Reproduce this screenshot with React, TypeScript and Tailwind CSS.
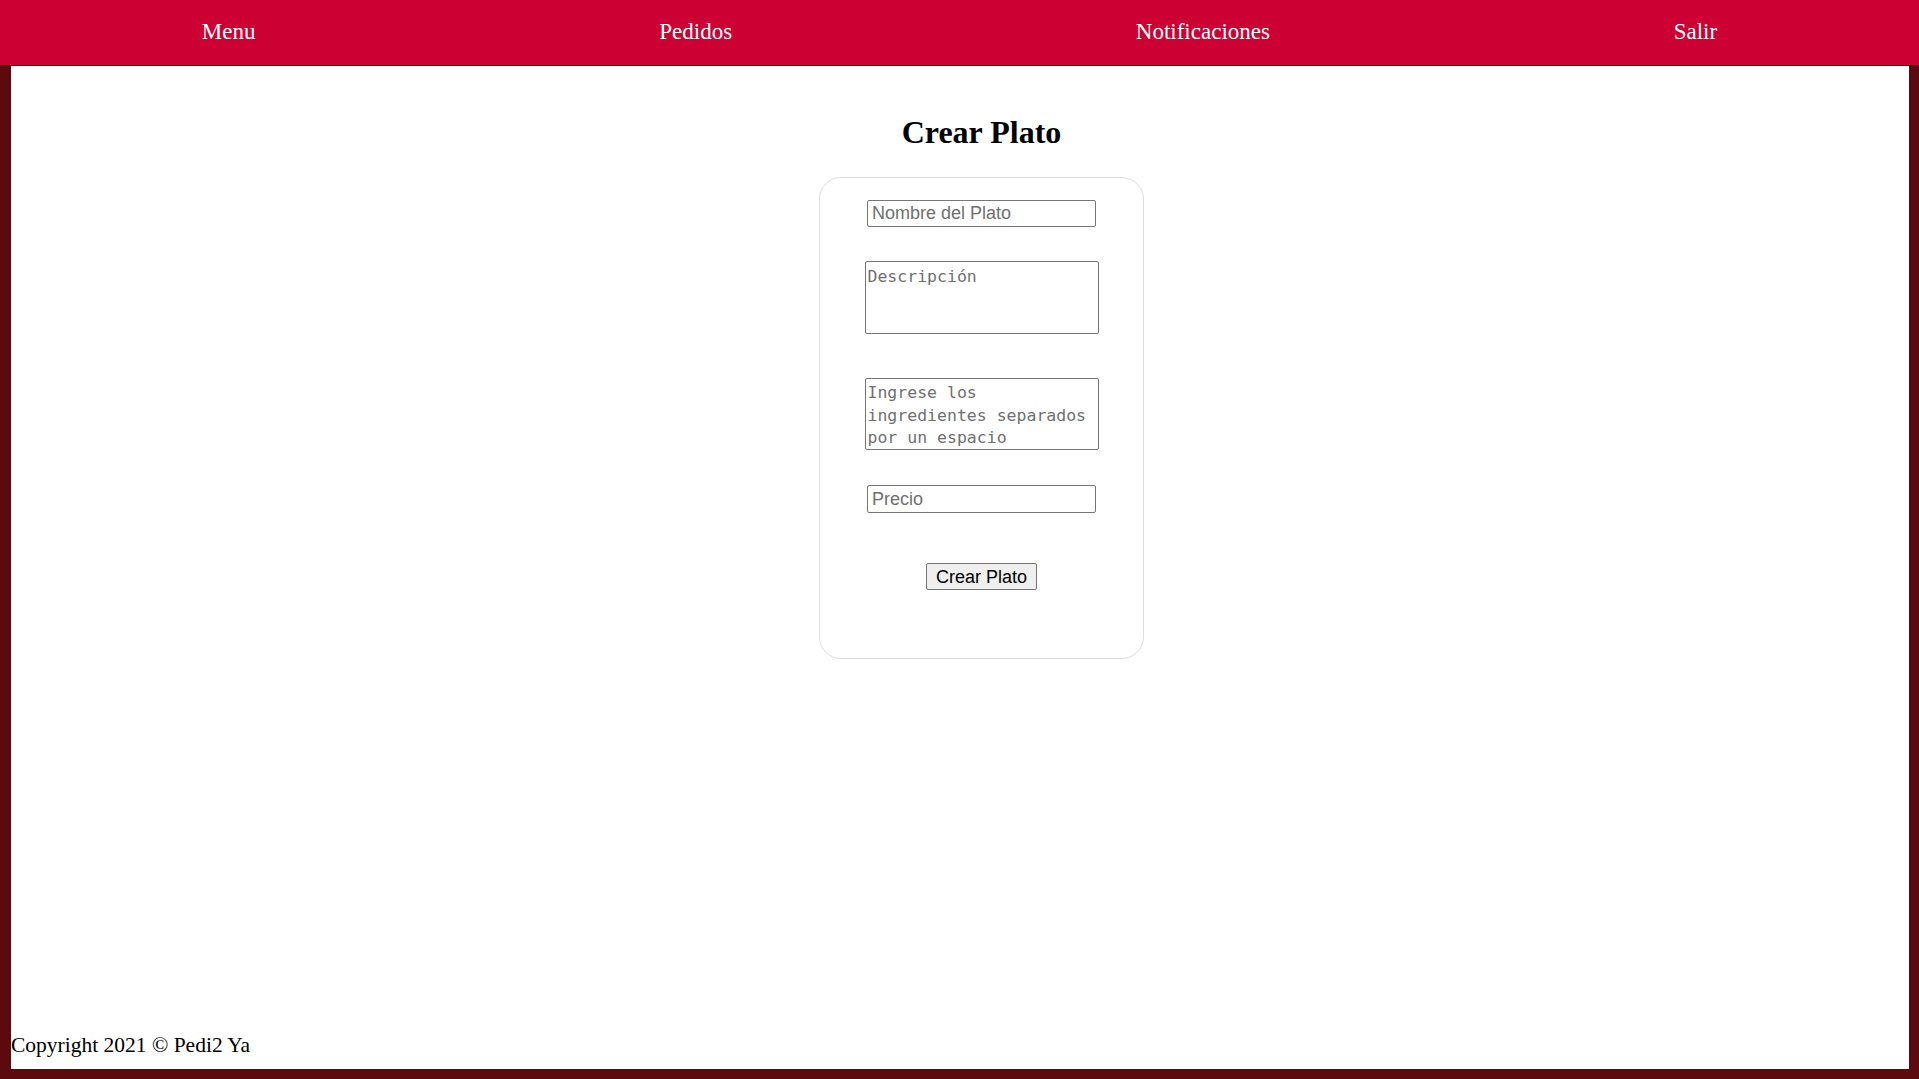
import type { ReactNode } from "react";

const NAV_ITEMS = ["Menu", "Pedidos", "Notificaciones", "Salir"];

function Field({ children, className }: { children: ReactNode; className: string }) {
  return <div className={`flex justify-center ${className}`}>{children}</div>;
}

export default function App() {
  return (
    <div className="h-screen flex flex-col bg-[#5c0a0d] font-['Liberation_Serif',serif]">
      {/* Top bar */}
      <nav className="h-[66px] shrink-0 bg-[#cc0033] border-b border-black flex items-center justify-around">
        {NAV_ITEMS.map((item) => (
          <a key={item} href="#" className="text-white text-[23px] leading-normal">
            {item}
          </a>
        ))}
      </nav>

      {/* Page body */}
      <div className="flex-1 bg-white ml-[11px] mr-[10px] mb-[10px] flex flex-col">
        <main className="flex-1 flex flex-col items-center pt-[50px] pl-[43px]">
          <h1 className="text-[32px] leading-[32px] font-bold text-black">Crear Plato</h1>

          <form
            className="mt-[29px] w-[325px] h-[482px] border border-[#dddddd] rounded-[22px] flex flex-col font-['Liberation_Sans',Arial,sans-serif]"
            onSubmit={(e) => e.preventDefault()}
          >
            <Field className="mt-[22px]">
              <input
                type="text"
                placeholder="Nombre del Plato"
                className="w-[229px] h-[27px] border border-[#767676] rounded-[2px] pl-[4px] text-[18px] placeholder:text-[#6f6f6f] outline-none"
              />
            </Field>

            <Field className="mt-[34px]">
              <textarea
                placeholder="Descripción"
                className="w-[234px] h-[73px] border border-[#767676] rounded-[2px] px-[2px] pt-[4px] resize-none text-[16.5px] leading-[22px] font-['DejaVu_Sans_Mono',monospace] placeholder:text-[#6f6f6f] outline-none"
              />
            </Field>

            <Field className="mt-[44px]">
              <textarea
                placeholder="Ingrese los ingredientes separados por un espacio"
                className="w-[234px] h-[72px] border border-[#767676] rounded-[2px] px-[2px] pt-[3px] resize-none overflow-hidden text-[16.5px] leading-[22.5px] font-['DejaVu_Sans_Mono',monospace] placeholder:text-[#6f6f6f] outline-none"
              />
            </Field>

            <Field className="mt-[35px]">
              <input
                type="text"
                placeholder="Precio"
                className="w-[229px] h-[28px] border border-[#767676] rounded-[2px] pl-[4px] text-[18px] placeholder:text-[#6f6f6f] outline-none"
              />
            </Field>

            <Field className="mt-[50px]">
              <button
                type="submit"
                className="w-[111px] h-[27px] bg-[#efefef] border border-[#767676] rounded-[2px] text-[18px] leading-none text-black"
              >
                Crear Plato
              </button>
            </Field>
          </form>
        </main>

        <footer className="text-[21.5px] leading-normal text-black pb-[8px]">
          Copyright 2021 © Pedi2 Ya
        </footer>
      </div>
    </div>
  );
}
